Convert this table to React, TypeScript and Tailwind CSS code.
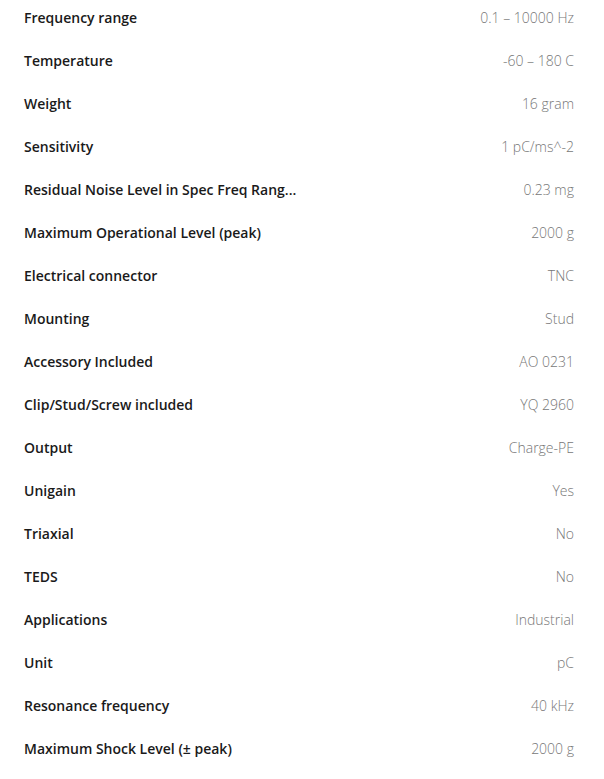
const specs: [string, string][] = [
  ["Frequency range", "0.1 – 10000 Hz"],
  ["Temperature", "-60 – 180 C"],
  ["Weight", "16 gram"],
  ["Sensitivity", "1 pC/ms^-2"],
  ["Residual Noise Level in Spec Freq Rang...", "0.23 mg"],
  ["Maximum Operational Level (peak)", "2000 g"],
  ["Electrical connector", "TNC"],
  ["Mounting", "Stud"],
  ["Accessory Included", "AO 0231"],
  ["Clip/Stud/Screw included", "YQ 2960"],
  ["Output", "Charge-PE"],
  ["Unigain", "Yes"],
  ["Triaxial", "No"],
  ["TEDS", "No"],
  ["Applications", "Industrial"],
  ["Unit", "pC"],
  ["Resonance frequency", "40 kHz"],
  ["Maximum Shock Level (± peak)", "2000 g"],
];

export default function App() {
  return (
    <div className="min-h-[779px] w-[604px] overflow-hidden bg-white font-['Open_Sans',sans-serif]">
      <div className="-mt-[4px] flex flex-col">
        {specs.map(([label, value]) => (
          <div
            key={label}
            className="flex h-[43px] items-center justify-between pl-[24px] pr-[30px]"
          >
            <span className="text-[14px] font-semibold text-[#1a1a1a]">
              {label}
            </span>
            <span className="text-[14px] font-light text-[#777777]">
              {value}
            </span>
          </div>
        ))}
      </div>
    </div>
  );
}
